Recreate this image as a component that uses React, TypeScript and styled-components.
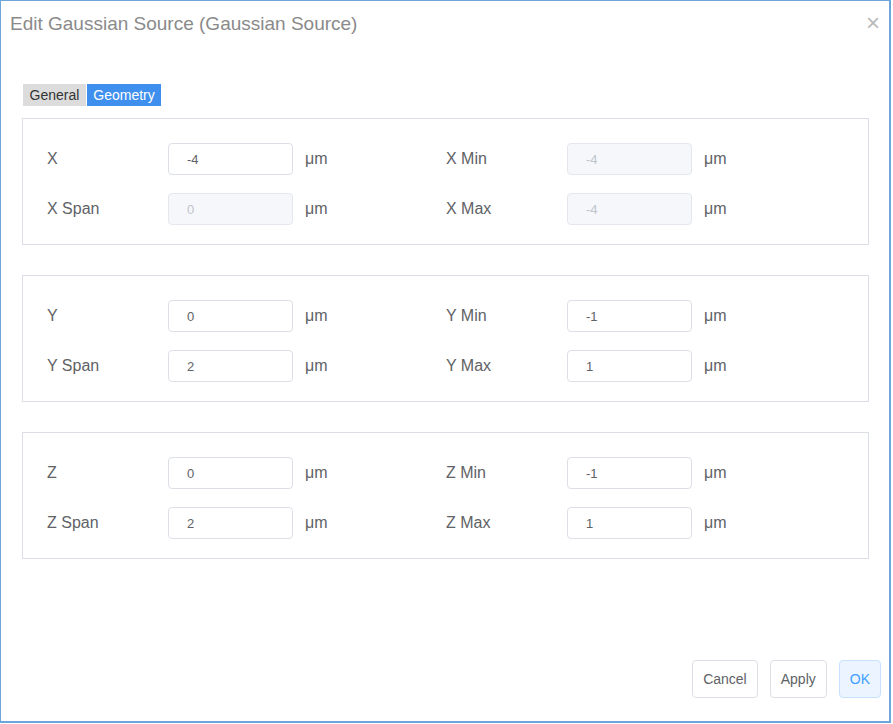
import React from "react";
import styled, { createGlobalStyle } from "styled-components";

const Global = createGlobalStyle`
  html, body { margin: 0; padding: 0; background: #fff; }
  body { font-family: "Liberation Sans", Arial, sans-serif; }
  * { box-sizing: border-box; }
`;

const Frame = styled.div`
  width: 891px;
  height: 723px;
  border-style: solid;
  border-color: #6ea6dc;
  border-width: 1px 2px 2px 1px;
  display: flex;
  flex-direction: column;
  background: #fff;
`;

const Header = styled.div`
  height: 45px;
  display: flex;
  align-items: center;
  justify-content: space-between;
  padding: 0 9px 0 9px;
`;

const Title = styled.div`
  font-size: 19px;
  color: #8a8a8a;
`;

const Close = styled.div`
  font-size: 24px;
  font-weight: 300;
  color: #bbbbbb;
  line-height: 1;
  margin-top: -1px;
`;

const Body = styled.div`
  padding: 38px 20px 0 21px;
  display: flex;
  flex-direction: column;
`;

const Tabs = styled.div`
  display: flex;
  gap: 1px;
  padding-left: 1px;
  margin-bottom: 12px;
`;

const Tab = styled.div<{ $active?: boolean }>`
  height: 22px;
  line-height: 22px;
  padding: 0 6.5px;
  font-size: 14px;
  background: ${(p) => (p.$active ? "#3f90ee" : "#dcdcdc")};
  color: ${(p) => (p.$active ? "#fff" : "#333")};
`;

const Panel = styled.div`
  border: 1px solid #dcdfe6;
  padding: 24px 0 19px 24px;
  display: grid;
  grid-template-columns: 121px 125px 153px 121px 125px auto;
  row-gap: 18px;
  align-items: center;
  & + & {
    margin-top: 30px;
  }
`;

const Label = styled.div`
  font-size: 16px;
  color: #606266;
  margin-top: -1px;
`;

const Input = styled.div<{ $disabled?: boolean }>`
  height: 32px;
  border: 1px solid ${(p) => (p.$disabled ? "#e4e7ed" : "#dcdfe6")};
  border-radius: 4px;
  background: ${(p) => (p.$disabled ? "#f5f7fa" : "#fff")};
  color: ${(p) => (p.$disabled ? "#c0c4cc" : "#606266")};
  font-size: 13px;
  padding-left: 18px;
  display: flex;
  align-items: center;
`;

const Unit = styled.div`
  font-size: 16px;
  color: #606266;
  padding-left: 12px;
  margin-top: -1px;
`;

const Footer = styled.div`
  margin-top: auto;
  display: flex;
  justify-content: flex-end;
  gap: 12px;
  padding: 0 8px 23px 0;
`;

const Button = styled.div<{ $primary?: boolean }>`
  height: 38px;
  padding: 0 10px;
  display: flex;
  align-items: center;
  font-size: 14px;
  border-radius: 4px;
  border: 1px solid ${(p) => (p.$primary ? "#c6e2ff" : "#dcdfe6")};
  background: ${(p) => (p.$primary ? "#ecf5ff" : "#fff")};
  color: ${(p) => (p.$primary ? "#409eff" : "#606266")};
`;

type Field = { label: string; value: string; disabled?: boolean };

const groups: Field[][] = [
  [
    { label: "X", value: "-4" },
    { label: "X Min", value: "-4", disabled: true },
    { label: "X Span", value: "0", disabled: true },
    { label: "X Max", value: "-4", disabled: true },
  ],
  [
    { label: "Y", value: "0" },
    { label: "Y Min", value: "-1" },
    { label: "Y Span", value: "2" },
    { label: "Y Max", value: "1" },
  ],
  [
    { label: "Z", value: "0" },
    { label: "Z Min", value: "-1" },
    { label: "Z Span", value: "2" },
    { label: "Z Max", value: "1" },
  ],
];

export default function App() {
  return (
    <>
      <Global />
      <Frame>
        <Header>
          <Title>Edit Gaussian Source (Gaussian Source)</Title>
          <Close>×</Close>
        </Header>
        <Body>
          <Tabs>
            <Tab>General</Tab>
            <Tab $active>Geometry</Tab>
          </Tabs>
          {groups.map((g, i) => (
            <Panel key={i}>
              {g.map((f) => (
                <React.Fragment key={f.label}>
                  <Label>{f.label}</Label>
                  <Input $disabled={f.disabled}>{f.value}</Input>
                  <Unit>μm</Unit>
                </React.Fragment>
              ))}
            </Panel>
          ))}
        </Body>
        <Footer>
          <Button>Cancel</Button>
          <Button>Apply</Button>
          <Button $primary>OK</Button>
        </Footer>
      </Frame>
    </>
  );
}
